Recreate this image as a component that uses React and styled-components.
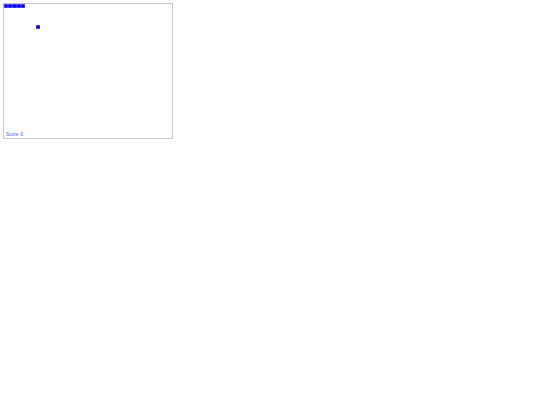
import styled, { createGlobalStyle } from "styled-components";

const CELL = 4.22;

const snake = [
  { x: 0, y: 0 },
  { x: 1, y: 0 },
  { x: 2, y: 0 },
  { x: 3, y: 0 },
  { x: 4, y: 0 },
];

const food = { x: 7.6, y: 4.9 };

function App() {
  return (
    <>
      <GlobalStyle />
      <Board>
        {snake.map((s, i) => (
          <Segment key={i} style={{ left: s.x * CELL, top: s.y * CELL }} />
        ))}
        <Food style={{ left: food.x * CELL, top: food.y * CELL }} />
        <Score>Score: 0</Score>
      </Board>
    </>
  );
}

export default App;

const GlobalStyle = createGlobalStyle`
  body {
    margin: 3px;
    background: #fff;
    font-family: "Liberation Sans", Arial, sans-serif;
  }
`;

const Board = styled.div`
  position: relative;
  width: 168px;
  height: 134px;
  border: 1px solid #c8c8c8;
  display: flex;
  align-items: flex-end;
  box-sizing: content-box;
`;

const Segment = styled.div`
  position: absolute;
  width: ${CELL}px;
  height: ${CELL}px;
  background: #0000ee;
  box-shadow: inset 0 0 0 0.4px #6f6ff5;
`;

const Food = styled(Segment)`
  background: #0000dd;
`;

const Score = styled.p`
  margin: 0 0 0 2px;
  font-size: 4.6px;
  line-height: 4.6px;
  color: #4a4af0;
`;
